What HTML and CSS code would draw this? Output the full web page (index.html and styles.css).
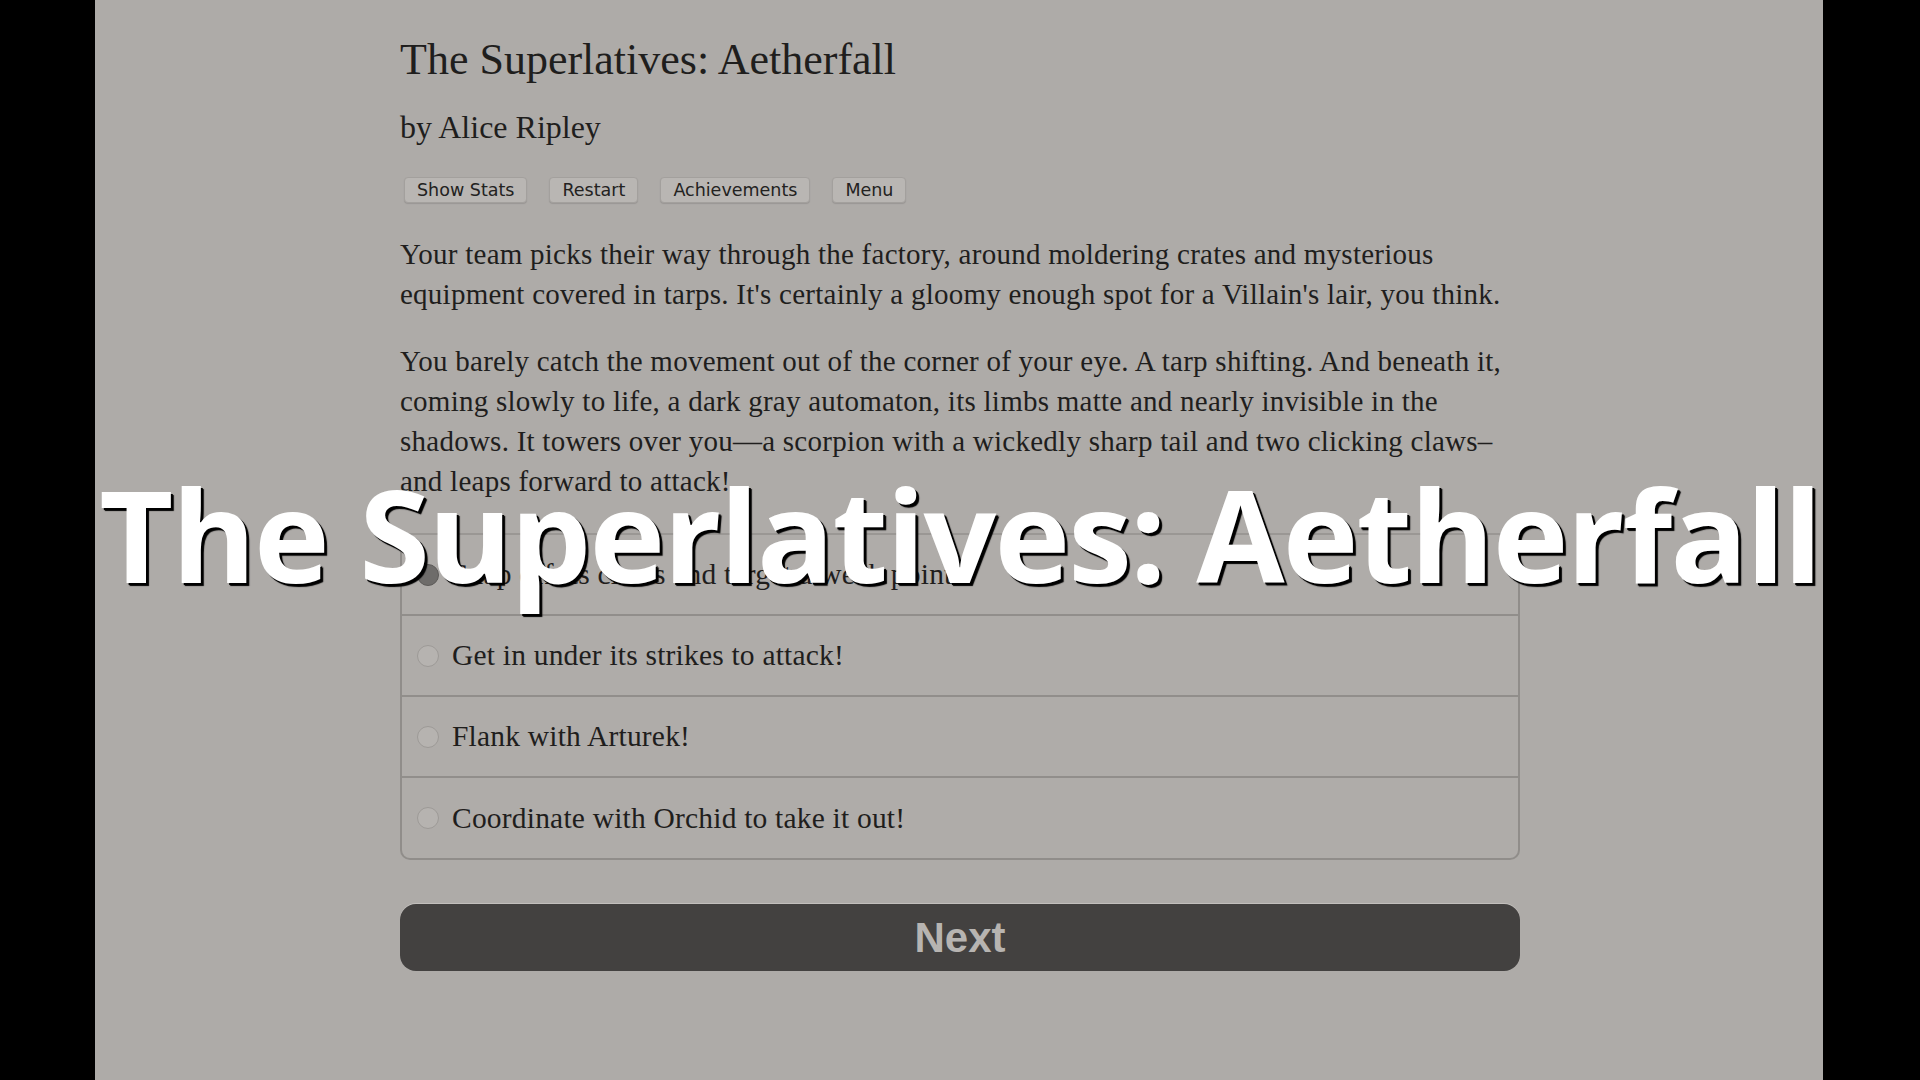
FILE: index.html
```html
<!DOCTYPE html>
<html lang="en">
<head>
  <meta charset="UTF-8">
  <title>The Superlatives: Aetherfall</title>
  <link rel="stylesheet" href="styles.css">
</head>
<body>
  <div class="screen">
    <div class="story">
      <h1>The Superlatives: Aetherfall</h1>
      <h2>by Alice Ripley</h2>
      <div class="toolbar">
        <button class="tool-btn">Show Stats</button>
        <button class="tool-btn">Restart</button>
        <button class="tool-btn">Achievements</button>
        <button class="tool-btn">Menu</button>
      </div>
      <p>Your team picks their way through the factory, around moldering crates and mysterious equipment covered in tarps. It's certainly a gloomy enough spot for a Villain's lair, you think.</p>
      <p>You barely catch the movement out of the corner of your eye. A tarp shifting. And beneath it, coming slowly to life, a dark gray automaton, its limbs matte and nearly invisible in the shadows. It towers over you&mdash;a scorpion with a wickedly sharp tail and two clicking claws&ndash;and leaps forward to attack!</p>
      <div class="choices">
        <label class="choice"><span class="radio checked"></span>Snap off its claws and target a weak point!</label>
        <label class="choice"><span class="radio"></span>Get in under its strikes to attack!</label>
        <label class="choice"><span class="radio"></span>Flank with Arturek!</label>
        <label class="choice"><span class="radio"></span>Coordinate with Orchid to take it out!</label>
      </div>
      <button class="next-btn">Next</button>
    </div>
  </div>
  <div class="overlay-title">The Superlatives: Aetherfall</div>
</body>
</html>
```

FILE: styles.css
```css
body {
  margin: 0;
  background: #000;
  height: 1080px;
  overflow: hidden;
}
.screen {
  width: 1728px;
  height: 1080px;
  margin-left: 95px;
  background: #aeaba8;
  font-family: 'Liberation Serif', 'Times New Roman', serif;
  color: #1f1e1d;
}
.story {
  width: 1120px;
  margin-left: 305px;
  padding-top: 34px;
}
.story h1 {
  font-size: 44px;
  font-weight: normal;
  line-height: 52px;
  margin: 0;
  color: #1f1e1d;
}
.story h2 {
  font-size: 32px;
  font-weight: normal;
  line-height: 36px;
  margin: 23px 0 0 0;
  color: #1f1e1d;
}
.toolbar {
  display: flex;
  gap: 22px;
  margin-top: 32px;
  padding-left: 4px;
}
.tool-btn {
  height: 26px;
  padding: 0 12px;
  font-family: 'DejaVu Sans', Verdana, sans-serif;
  font-size: 17.5px;
  color: #232221;
  background: #b9b6b3;
  border: 1px solid #a3a09d;
  border-radius: 4px;
  box-shadow: 0 1px 1px rgba(0,0,0,0.12);
}
.story p {
  font-size: 29px;
  line-height: 40px;
  letter-spacing: 0.25px;
  margin: 31px 0 0 0;
}
.story p + p {
  margin-top: 27px;
}
.choices {
  margin-top: 32px;
  border: 2px solid #908d8a;
  border-top-color: #9a9794;
  border-radius: 0 0 10px 10px;
  background: #afaca9;
}
.choice {
  display: flex;
  align-items: center;
  height: 79px;
  padding-left: 15px;
  font-size: 29.5px;
  letter-spacing: 0.2px;
  color: #1f1e1d;
  border-top: 2px solid #918e8b;
}
.choice:first-child {
  border-top: none;
}
.choice:last-child {
  height: 80px;
}
.radio {
  width: 20px;
  height: 20px;
  border-radius: 50%;
  border: 1px solid #9d9a97;
  background: #b6b3b0;
  margin-right: 13px;
  flex-shrink: 0;
}
.radio.checked {
  background: #6e6c6a;
  border-color: #5c5a58;
}
.next-btn {
  display: block;
  width: 1120px;
  height: 67px;
  margin-top: 44px;
  background: #434140;
  border: none;
  border-radius: 16px;
  box-shadow: 0 -1px 0 #c2bfbc;
  font-family: 'Liberation Sans', Arial, sans-serif;
  font-weight: bold;
  font-size: 42px;
  color: #b7b4b1;
}
.overlay-title {
  position: absolute;
  top: 470px;
  left: 0;
  width: 1920px;
  text-align: center;
  font-family: 'Open Sans', sans-serif;
  font-weight: 700;
  font-size: 128px;
  line-height: 1;
  letter-spacing: -1.8px;
  color: #fff;
  text-shadow: 3px 3px 1px #000, 2px 2px 0 #000;
  white-space: nowrap;
}
```
